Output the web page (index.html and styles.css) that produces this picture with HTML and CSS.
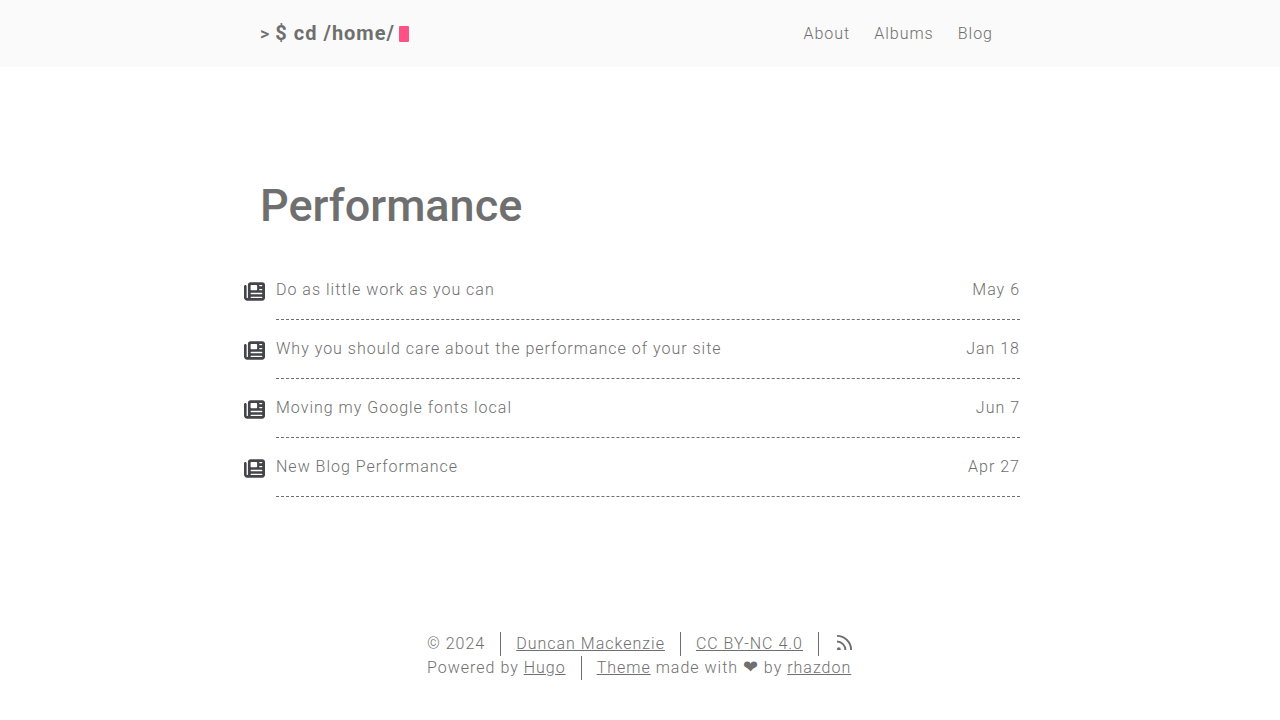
FILE: index.html
```
<!DOCTYPE html>
<html lang="en">
<head>
<meta charset="utf-8">
<meta name="viewport" content="width=device-width, initial-scale=1">
<title>Performance</title>
<link rel="stylesheet" href="styles.css">
</head>
<body>
<svg class="sprite" aria-hidden="true">
  <symbol id="newspaper" viewBox="0 0 512 512"><path fill="currentColor" d="M96 96c0-35.300 28.700-64 64-64h288c35.300 0 64 28.700 64 64v320c0 35.300-28.700 64-64 64H80c-44.200 0-80-35.800-80-80V128c0-17.700 14.300-32 32-32s32 14.300 32 32v272c0 8.800 7.200 16 16 16s16-7.200 16-16V96zm64 24v80c0 13.300 10.700 24 24 24h112c13.300 0 24-10.700 24-24v-80c0-13.300-10.700-24-24-24H184c-13.300 0-24 10.700-24 24zm208-8c0 8.800 7.200 16 16 16h48c8.800 0 16-7.200 16-16s-7.200-16-16-16h-48c-8.800 0-16 7.200-16 16zm0 96c0 8.800 7.200 16 16 16h48c8.800 0 16-7.200 16-16s-7.200-16-16-16h-48c-8.800 0-16 7.200-16 16zM160 304c0 8.800 7.200 16 16 16h256c8.800 0 16-7.200 16-16s-7.200-16-16-16H176c-8.800 0-16 7.200-16 16zm0 96c0 8.800 7.200 16 16 16h256c8.800 0 16-7.200 16-16s-7.200-16-16-16H176c-8.800 0-16 7.200-16 16z"/></symbol>
</svg>
<header class="header">
  <div class="header-inner">
    <a class="logo" href="#"><span class="logo-mark">&gt;</span><span class="logo-text">$ cd /home/</span><span class="logo-cursor"></span></a>
    <nav class="menu">
      <a href="#">About</a>
      <a href="#">Albums</a>
      <a href="#">Blog</a>
    </nav>
  </div>
</header>
<main class="content">
  <h1 class="title">Performance</h1>
  <ul class="posts">
    <li class="post"><svg class="post-icon" aria-hidden="true"><use href="#newspaper"/></svg><a class="post-link" href="#"><span>Do as little work as you can</span><time>May 6</time></a></li>
    <li class="post"><svg class="post-icon" aria-hidden="true"><use href="#newspaper"/></svg><a class="post-link" href="#"><span>Why you should care about the performance of your site</span><time>Jan 18</time></a></li>
    <li class="post"><svg class="post-icon" aria-hidden="true"><use href="#newspaper"/></svg><a class="post-link" href="#"><span>Moving my Google fonts local</span><time>Jun 7</time></a></li>
    <li class="post"><svg class="post-icon" aria-hidden="true"><use href="#newspaper"/></svg><a class="post-link" href="#"><span>New Blog Performance</span><time>Apr 27</time></a></li>
  </ul>
</main>
<footer class="footer">
  <div class="footer-inner">
    <div class="footer-row">
      <span class="footer-item">© 2024</span>
      <span class="footer-item"><a href="#">Duncan Mackenzie</a></span>
      <span class="footer-item"><a href="#">CC BY-NC 4.0</a></span>
      <span class="footer-item"><a class="rss" href="#" aria-label="RSS"><svg class="rss-icon" viewBox="0 0 18 18" fill="none" stroke="currentColor" stroke-width="2"><path d="M1 2a15 15 0 0 1 15 15M1 8a9 9 0 0 1 9 9"/><path d="M1 17v-1a2 2 0 0 1 4 0v1z" fill="currentColor" stroke="none"/></svg></a></span>
    </div>
    <div class="footer-row">
      <span class="footer-item">Powered by <a href="#">Hugo</a></span>
      <span class="footer-item"><a href="#">Theme</a> made with <span class="heart">❤</span> by <a href="#">rhazdon</a></span>
    </div>
  </div>
</footer>
</body>
</html>
```
FILE: styles.css
```
* { box-sizing: border-box; }
body {
  display: flex;
  flex-direction: column;
  min-height: 100vh;
  margin: 0;
  background: #fff;
  color: #6f6f6f;
  font: 300 16px/24px Roboto, "DejaVu Sans", sans-serif;
  letter-spacing: 1px;
}
a { color: inherit; }
.sprite { position: absolute; width: 0; height: 0; }
.header { background: #fafafa; }
.header-inner {
  display: flex;
  align-items: center;
  justify-content: space-between;
  max-width: 800px;
  min-height: 67px;
  margin: 0 auto;
  padding: 20px 47px 20px 20px;
}
.logo {
  display: flex;
  align-items: center;
  text-decoration: none;
  font-size: 20px;
  font-weight: 700;
}
.logo-text { padding-bottom: 2px; }
.logo-mark { margin-right: 5px; font-size: 18px; font-weight: 500; }
.logo-cursor {
  width: 10px;
  height: 16px;
  margin-left: 4px;
  border-radius: 1px;
  background: #fe5186;
}
.menu { display: flex; gap: 24px; }
.menu a { text-decoration: none; }
.content {
  flex: 1;
  width: 100%;
  max-width: 800px;
  margin: 0 auto;
  padding: 107px 20px 0;
}
.title {
  margin: 0 0 40px;
  font-size: 45px;
  font-weight: 500;
  line-height: 64px;
  letter-spacing: 0;
}
.posts { margin: 0; padding: 0; list-style: none; }
.post {
  display: flex;
  gap: 11px;
  margin: 0 0 17px -16px;
}
.post-icon { flex: none; width: 21px; height: 21px; margin-top: 3px; color: #44444b; }
.post-link {
  display: flex;
  flex: 1;
  justify-content: space-between;
  padding-bottom: 17px;
  border-bottom: 1px dashed #6f6f6f;
  text-decoration: none;
}
.footer { padding: 0 20px 40px; }
.footer-inner { width: fit-content; margin: 0 auto; }
.footer-row { display: flex; }
.footer-item + .footer-item {
  margin-left: 15px;
  padding-left: 15px;
  border-left: 1px solid #6f6f6f;
}
.heart { font-family: "DejaVu Sans", sans-serif; font-size: 18px; line-height: 16px; }
.rss { display: block; padding: 2px 0 0 2px; }
.rss-icon { display: block; width: 17px; height: 17px; }
```
